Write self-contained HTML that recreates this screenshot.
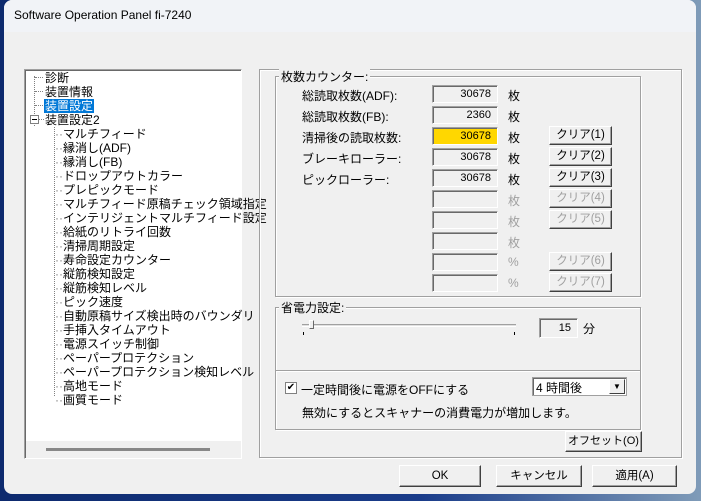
<!DOCTYPE html>
<html><head><meta charset="utf-8"><style>
*{margin:0;padding:0;box-sizing:border-box}
body{width:701px;height:501px;overflow:hidden;background:linear-gradient(90deg,#0d2a6e,#1a3c8a 60%,#7f9bb8);position:relative;font-family:"Liberation Sans","Noto Sans CJK JP",sans-serif;font-size:12px;color:#000}
.win{position:absolute;left:4px;top:0;width:692px;height:494px;background:#f0f0f0;border-radius:8px;overflow:hidden}
.title{position:absolute;left:0;top:0;width:100%;height:32px;background:#f1f3f7}
.a{position:absolute;white-space:nowrap}
.tree{position:absolute;left:20px;top:69px;width:218px;height:390px;background:#fff;border:1px solid #a0a0a0;border-right-color:#fff;border-bottom-color:#fff;box-shadow:inset 1px 1px 0 #696969}
.tree .a{font-size:12px;line-height:14px}
.dot{position:absolute;border-top:1px dotted #808080;width:8px}
.vd{position:absolute;border-left:1px dotted #808080}
.grp{position:absolute;border:1px solid #a0a0a0;box-shadow:1px 1px 0 #fff inset,1px 1px 0 #fff}
.lbl{background:#f0f0f0;padding:0 2px}
.box{position:absolute;width:66px;height:18px;border:1px solid #a0a0a0;border-right-color:#fff;border-bottom-color:#fff;box-shadow:inset 1px 1px 0 #696969;text-align:right;padding-right:6px;line-height:16px;font-family:"Liberation Sans",sans-serif;font-size:11px}
.btn{position:absolute;background:#f0f0f0;border:1px solid;border-color:#fff #404040 #404040 #fff;box-shadow:inset -1px -1px 0 #a0a0a0;text-align:center;font-size:11.5px;white-space:nowrap;overflow:hidden}
.dis{color:#a0a0a0}
</style></head><body>
<div class="win">
<div class="title"></div>
<div class="a" style="left:10px;top:8px;font-size:12px">Software Operation Panel fi-7240</div>

<div class="tree">
<div class="vd" style="left:9px;top:6px;height:50px"></div>
<div class="dot" style="left:10px;top:7px"></div><div class="a" style="left:20px;top:1px">診断</div>
<div class="dot" style="left:10px;top:21px"></div><div class="a" style="left:20px;top:15px">装置情報</div>
<div class="dot" style="left:10px;top:35px"></div><div class="a" style="left:19px;top:29px;background:#0078d7;color:#fff;padding:0 1px">装置設定</div>
<div style="position:absolute;left:5px;top:45px;width:9px;height:9px;border:1px solid #808080;background:#fff"></div><div style="position:absolute;left:7px;top:49px;width:5px;border-top:1px solid #000"></div>
<div class="dot" style="left:14px;top:49px;width:5px"></div><div class="a" style="left:20px;top:43px">装置設定2</div>
<div class="vd" style="left:29px;top:57px;height:269px"></div>
<div style="position:absolute;left:30px;top:57px">
<div class="a" style="top:0;left:0"><span style="color:#808080">··</span>マルチフィード</div>
<div class="a" style="top:14px;left:0"><span style="color:#808080">··</span>縁消し(ADF)</div>
<div class="a" style="top:28px;left:0"><span style="color:#808080">··</span>縁消し(FB)</div>
<div class="a" style="top:42px;left:0"><span style="color:#808080">··</span>ドロップアウトカラー</div>
<div class="a" style="top:56px;left:0"><span style="color:#808080">··</span>プレピックモード</div>
<div class="a" style="top:70px;left:0"><span style="color:#808080">··</span>マルチフィード原稿チェック領域指定</div>
<div class="a" style="top:84px;left:0"><span style="color:#808080">··</span>インテリジェントマルチフィード設定</div>
<div class="a" style="top:98px;left:0"><span style="color:#808080">··</span>給紙のリトライ回数</div>
<div class="a" style="top:112px;left:0"><span style="color:#808080">··</span>清掃周期設定</div>
<div class="a" style="top:126px;left:0"><span style="color:#808080">··</span>寿命設定カウンター</div>
<div class="a" style="top:140px;left:0"><span style="color:#808080">··</span>縦筋検知設定</div>
<div class="a" style="top:154px;left:0"><span style="color:#808080">··</span>縦筋検知レベル</div>
<div class="a" style="top:168px;left:0"><span style="color:#808080">··</span>ピック速度</div>
<div class="a" style="top:182px;left:0"><span style="color:#808080">··</span>自動原稿サイズ検出時のバウンダリ</div>
<div class="a" style="top:196px;left:0"><span style="color:#808080">··</span>手挿入タイムアウト</div>
<div class="a" style="top:210px;left:0"><span style="color:#808080">··</span>電源スイッチ制御</div>
<div class="a" style="top:224px;left:0"><span style="color:#808080">··</span>ペーパープロテクション</div>
<div class="a" style="top:238px;left:0"><span style="color:#808080">··</span>ペーパープロテクション検知レベル</div>
<div class="a" style="top:252px;left:0"><span style="color:#808080">··</span>高地モード</div>
<div class="a" style="top:266px;left:0"><span style="color:#808080">··</span>画質モード</div>
</div>
<div style="position:absolute;left:1px;right:0;bottom:0;height:17px;background:#f0f0f0"></div>
<div style="position:absolute;left:21px;width:164px;bottom:7px;height:3px;background:#888"></div>
</div>

<div class="grp" style="left:255px;top:69px;width:423px;height:389px"></div>
<div class="grp" style="left:271px;top:76px;width:366px;height:221px"></div>
<div class="a lbl" style="left:275px;top:68px">枚数カウンター:</div>
<div class="a" style="left:298px;top:87px">総読取枚数(ADF):</div>
<div class="a" style="left:298px;top:108px">総読取枚数(FB):</div>
<div class="a" style="left:298px;top:129px">清掃後の読取枚数:</div>
<div class="a" style="left:298px;top:150px">ブレーキローラー:</div>
<div class="a" style="left:298px;top:171px">ピックローラー:</div>
<div class="box" style="left:428px;top:85px">30678</div>
<div class="box" style="left:428px;top:106px">2360</div>
<div class="box" style="left:428px;top:127px;background:#ffd700">30678</div>
<div class="box" style="left:428px;top:148px">30678</div>
<div class="box" style="left:428px;top:169px">30678</div>
<div class="box" style="left:428px;top:190px"></div>
<div class="box" style="left:428px;top:211px"></div>
<div class="box" style="left:428px;top:232px"></div>
<div class="box" style="left:428px;top:253px"></div>
<div class="box" style="left:428px;top:274px"></div>
<div class="a" style="left:504px;top:87px">枚</div>
<div class="a" style="left:504px;top:108px">枚</div>
<div class="a" style="left:504px;top:129px">枚</div>
<div class="a" style="left:504px;top:150px">枚</div>
<div class="a" style="left:504px;top:171px">枚</div>
<div class="a dis" style="left:504px;top:192px">枚</div>
<div class="a dis" style="left:504px;top:213px">枚</div>
<div class="a dis" style="left:504px;top:234px">枚</div>
<div class="a dis" style="left:504px;top:255px">%</div>
<div class="a dis" style="left:504px;top:276px">%</div>
<div class="btn" style="left:545px;top:126px;width:63px;height:19px;line-height:17px">クリア(1)</div>
<div class="btn" style="left:545px;top:147px;width:63px;height:19px;line-height:17px">クリア(2)</div>
<div class="btn" style="left:545px;top:168px;width:63px;height:19px;line-height:17px">クリア(3)</div>
<div class="btn dis" style="left:545px;top:189px;width:63px;height:19px;line-height:17px">クリア(4)</div>
<div class="btn dis" style="left:545px;top:210px;width:63px;height:19px;line-height:17px">クリア(5)</div>
<div class="btn dis" style="left:545px;top:252px;width:63px;height:19px;line-height:17px">クリア(6)</div>
<div class="btn dis" style="left:545px;top:273px;width:63px;height:19px;line-height:17px">クリア(7)</div>

<div class="grp" style="left:271px;top:307px;width:366px;height:123px"></div>
<div class="a lbl" style="left:275px;top:299px">省電力設定:</div>
<div style="position:absolute;left:298px;top:324px;width:214px;height:3px;border-top:1px solid #a0a0a0;border-bottom:1px solid #fff;background:#e0e0e0"></div>
<div style="position:absolute;left:305px;top:320px;width:5px;height:9px;border:1px solid;border-color:#fff #696969 #696969 #fff;background:#f0f0f0"></div>
<div style="position:absolute;left:299px;top:332px;width:1px;height:3px;background:#000"></div>
<div style="position:absolute;left:510px;top:332px;width:1px;height:3px;background:#000"></div>
<div class="box" style="left:535px;top:318px;width:39px;height:20px;line-height:18px;font-size:11px">15</div>
<div class="a" style="left:579px;top:320px">分</div>
<div style="position:absolute;left:272px;top:370px;width:364px;border-top:1px solid #a0a0a0;border-bottom:1px solid #fff"></div>
<div style="position:absolute;left:281px;top:382px;width:12px;height:12px;border:1px solid #808080;background:#fff;font-size:10px;line-height:10px;text-align:center">✔</div>
<div class="a" style="left:297px;top:381px">一定時間後に電源をOFFにする</div>
<div style="position:absolute;left:528px;top:377px;width:95px;height:19px;border:1px solid #a0a0a0;box-shadow:inset 1px 1px 0 #696969;background:#fff"><span class="a" style="left:3px;top:1px">4 時間後</span>
<div style="position:absolute;right:1px;top:1px;width:16px;height:15px;background:#f0f0f0;border:1px solid;border-color:#fff #404040 #404040 #fff;font-size:8px;text-align:center;line-height:13px">▼</div></div>
<div class="a" style="left:298px;top:404px">無効にするとスキャナーの消費電力が増加します。</div>
<div class="btn" style="left:561px;top:431px;width:77px;height:21px;line-height:19px;font-size:11px">オフセット(O)</div>

<div class="btn" style="left:395px;top:465px;width:82px;height:22px;line-height:20px">OK</div>
<div class="btn" style="left:492px;top:465px;width:86px;height:22px;line-height:20px">キャンセル</div>
<div class="btn" style="left:588px;top:465px;width:85px;height:22px;line-height:20px">適用(A)</div>
</div>
</body></html>
